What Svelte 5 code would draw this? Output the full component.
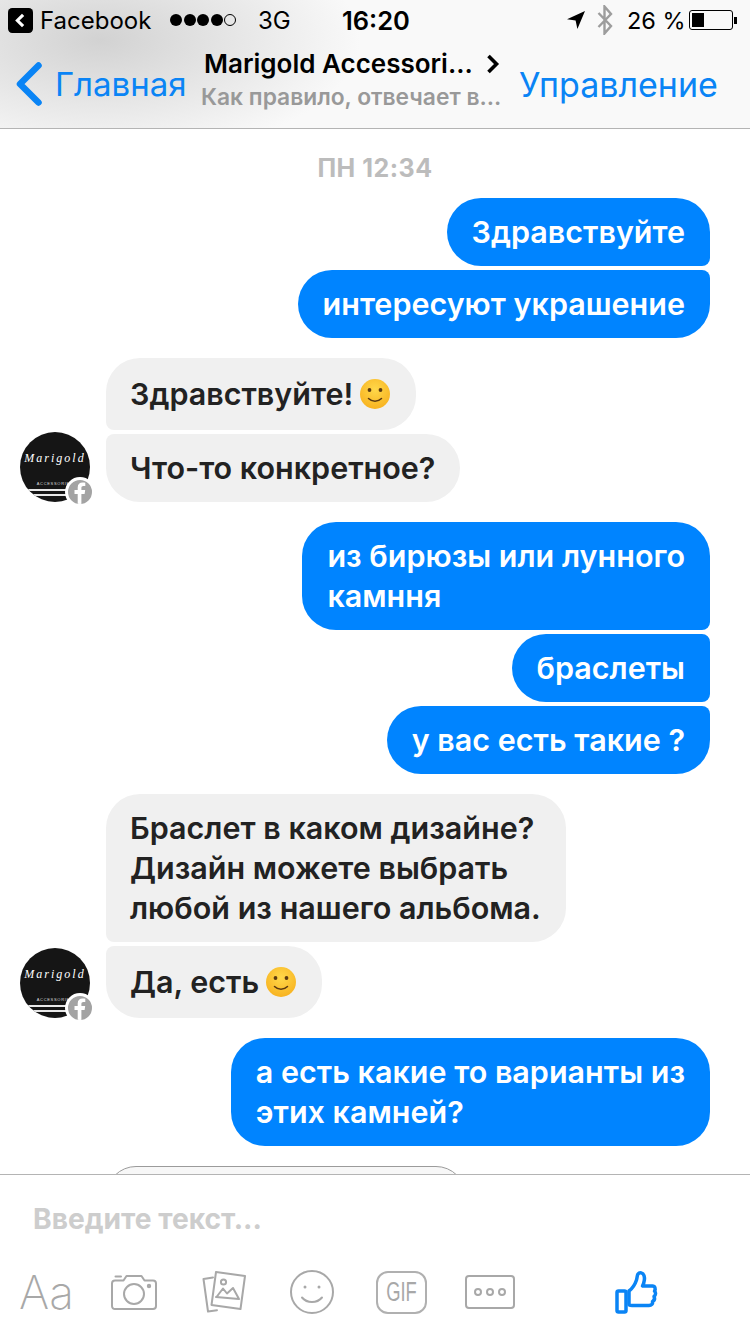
<script>
	// conversation, top to bottom
	const groups = [
		{ side: 'me', items: [{ lines: ['Здравствуйте'] }, { lines: ['интересуют украшение'] }] },
		{ side: 'them', items: [{ lines: ['Здравствуйте!'], smile: true }, { lines: ['Что-то конкретное?'] }] },
		{
			side: 'me',
			items: [
				{ lines: ['из бирюзы или лунного', 'камння'] },
				{ lines: ['браслеты'] },
				{ lines: ['у вас есть такие ?'] }
			]
		},
		{
			side: 'them',
			items: [
				{ lines: ['Браслет в каком дизайне?', 'Дизайн можете выбрать', 'любой из нашего альбома.'] },
				{ lines: ['Да, есть'], smile: true }
			]
		},
		{ side: 'me', items: [{ lines: ['а есть какие то варианты из', 'этих камней?'] }] }
	];
</script>

{#snippet smiley()}
	<svg class="smiley" viewBox="0 0 32 32" aria-hidden="true">
		<defs>
			<radialGradient id="sm" cx="50%" cy="35%" r="70%">
				<stop offset="0%" stop-color="#ffd84a" />
				<stop offset="100%" stop-color="#f7b01e" />
			</radialGradient>
		</defs>
		<circle cx="16" cy="16" r="15" fill="url(#sm)" />
		<circle cx="10.5" cy="12" r="1.9" fill="#5c3a10" />
		<circle cx="21.5" cy="12" r="1.9" fill="#5c3a10" />
		<path d="M9.5 20.5c3.5 3.6 9.5 3.6 13 0" fill="none" stroke="#5c3a10" stroke-width="1.5" stroke-linecap="round" />
	</svg>
{/snippet}

{#snippet avatar()}
	<div class="avatar">
		<div class="disc">
			<span class="brand">Marigold</span>
			<span class="brand-sub">ACCESSORIES</span>
			<span class="stripe"></span>
			<span class="stripe"></span>
		</div>
		<span class="fb-badge">
			<svg viewBox="0 0 24 24" aria-hidden="true">
				<path d="M13.4 24V14h3.2l.6-3.9h-3.8V8c0-1.2.5-2 2.1-2h1.8V2.700c-.8-.1-1.700-.2-2.700-.2-3 0-4.900 1.800-4.900 5v2.600H6.500V14h3.200v10z" fill="#fff" />
			</svg>
		</span>
	</div>
{/snippet}

<div class="screen">
	<header class="top">
		<div class="status">
			<span class="back-app">
				<svg viewBox="0 0 24 24" aria-hidden="true">
					<rect width="24" height="24" rx="4" fill="#000" />
					<path d="M14.500 6.500 9 12l5.500 5.500" fill="none" stroke="#fff" stroke-width="3" />
				</svg>
			</span>
			<span class="st-app">Facebook</span>
			<span class="signal">
				<i></i><i></i><i></i><i></i><i class="off"></i>
			</span>
			<span class="st-net">3G</span>
			<span class="st-time">16:20</span>
			<svg class="st-loc" viewBox="0 0 18 18" aria-hidden="true">
				<path d="M18 0 0 8.200l8.600 1.200L10.400 18z" fill="#000" />
			</svg>
			<svg class="st-bt" viewBox="0 0 16 30" aria-hidden="true">
				<path d="M1.500 8 14 21l-6.500 7.500V1.500L14 9 1.500 22" fill="none" stroke="#9d9d9d" stroke-width="2.400" />
			</svg>
			<span class="st-batt">26 %</span>
			<span class="battery"><span class="level"></span></span>
			<span class="nub"></span>
		</div>
		<nav class="nav">
			<div class="nav-back">
				<svg viewBox="0 0 27 44" aria-hidden="true">
					<path d="M23.500 3.500 5 22l18.500 18.500" fill="none" stroke="#0a84f5" stroke-width="6.500" stroke-linecap="round" stroke-linejoin="round" />
				</svg>
				<span>Главная</span>
			</div>
			<div class="nav-title">
				<div class="title-row">
					<span>Marigold Accessori...</span>
					<svg viewBox="0 0 14 20" aria-hidden="true">
						<path d="M2.500 2 10.500 10 2.500 18" fill="none" stroke="#000" stroke-width="3.600" />
					</svg>
				</div>
				<div class="subtitle">Как правило, отвечает в...</div>
			</div>
			<div class="nav-action">Управление</div>
		</nav>
	</header>

	<main class="thread">
		<div class="day">ПН 12:34</div>
		{#each groups as g}
			<section class="group {g.side}">
				{#if g.side === 'them'}
					{@render avatar()}
				{/if}
				<div class="stack">
					{#each g.items as m, i}
						<div class="bubble" class:first={i === 0} class:last={i === g.items.length - 1} class:tall={m.smile}>
							{#if m.smile}
								<span>{m.lines[0]}</span>
								{@render smiley()}
							{:else}
								{#each m.lines as line, n}
									{#if n > 0}<br />{/if}{line}
								{/each}
							{/if}
						</div>
					{/each}
				</div>
			</section>
		{/each}
		<div class="attachment"></div>
	</main>

	<footer class="composer">
		<div class="placeholder">Введите текст...</div>
		<div class="tools">
			<span class="aa">Aa</span>
			<svg class="cam" viewBox="0 0 46 36" aria-hidden="true">
				<path d="M1 9.500C1 7.500 2.500 6.500 4 6.500h8.500L15.500 2h15l3 4.500H42c1.800 0 3 1.200 3 3V32c0 1.800-1.200 3-3 3H4c-1.800 0-3-1.200-3-3z" />
				<circle cx="23" cy="20" r="10" />
				<path d="M4.500 2.500H10" />
				<circle cx="38" cy="12" r="1.200" fill="#a8a8a8" />
			</svg>
			<svg class="gal" viewBox="0 0 44 42" aria-hidden="true">
				<path d="M11 6.500 1.500 8 6 40.500l9-1.300" />
				<path d="M14 1 43 5 38.500 38 9.500 34z" />
				<circle cx="21.500" cy="11" r="2.600" />
				<path d="M14.500 26 21 17.500l4 5 6-5.500 6 11-23-2z" />
			</svg>
			<svg class="face" viewBox="0 0 44 44" aria-hidden="true">
				<circle cx="22" cy="22" r="21" />
				<circle cx="15" cy="17" r="1.500" fill="#a8a8a8" stroke="none" />
				<circle cx="29" cy="17" r="1.500" fill="#a8a8a8" stroke="none" />
				<path d="M12 27.500c5 6 15 6 20 0" />
			</svg>
			<span class="gif"><span>GIF</span></span>
			<svg class="more" viewBox="0 0 50 34" aria-hidden="true">
				<rect x="1" y="1" width="48" height="32" rx="3" />
				<circle cx="13" cy="17" r="3" />
				<circle cx="25" cy="17" r="3" />
				<circle cx="37" cy="17" r="3" />
			</svg>
			<svg class="thumb" viewBox="0 0 43 44" aria-hidden="true">
				<rect x="2" y="21" width="9" height="21" rx="1.500" />
				<path d="M14 21c4-3 6-6.500 7.500-11 .8-2.500.5-4.500 1.500-6 1.500-2 5-1.500 6 1.500 1 3-.3 8-1.500 10.500h10c2.500 0 3.500 3 2 5 1.500 1.500 1.500 4-.5 5.500 1 2 .3 4-1.500 5 .5 2.500-1 4-3.500 4H17c-1.300 0-3-.5-3-1.500z" />
			</svg>
		</div>
	</footer>
</div>

<style>
	:global(body) {
		background: #fff;
	}

	.screen {
		width: 750px;
		height: 1334px;
		display: flex;
		flex-direction: column;
		overflow: hidden;
		font-family: Inter, 'Liberation Sans', sans-serif;
		background: #fff;
	}

	/* ── Header ── */

	.top {
		box-sizing: border-box;
		height: 129px;
		flex-shrink: 0;
		border-bottom: 1px solid #b4b4b4;
		background:
			radial-gradient(ellipse 260px 120px at 100px 40px, #d2d2d2 0%, rgba(210, 210, 210, 0) 100%),
			#f9f9f9;
	}

	.status {
		height: 40px;
		display: flex;
		align-items: center;
		padding-left: 8px;
		color: #000;
		font-size: 24px;
	}

	.back-app svg {
		display: block;
		width: 25px;
		height: 25px;
	}

	.st-app {
		margin-left: 7px;
		width: 130px;
	}

	.signal {
		display: flex;
		gap: 1.500px;
		width: 88px;
	}

	.signal i {
		width: 12px;
		height: 12px;
		border-radius: 50%;
		background: #000;
	}

	.signal i.off {
		background: none;
		border: 1px solid #000;
		box-sizing: border-box;
	}

	.st-net {
		width: 84px;
	}

	.st-time {
		width: 225px;
		font-size: 25.500px;
		font-weight: 600;
	}

	.st-loc {
		width: 18px;
		height: 18px;
		margin-right: 12px;
	}

	.st-bt {
		width: 16px;
		height: 30px;
		margin-right: 14px;
	}

	.st-batt {
		width: 62px;
		font-size: 23.500px;
	}

	.battery {
		box-sizing: border-box;
		width: 44px;
		height: 20px;
		border: 1px solid #000;
		border-radius: 3px;
		padding: 2px;
	}

	.level {
		display: block;
		width: 12px;
		height: 100%;
		background: #000;
	}

	.nub {
		width: 3px;
		height: 7px;
		margin-left: 1px;
		background: #000;
	}

	.nav {
		height: 88px;
		display: flex;
		align-items: flex-start;
		color: #0a84f5;
	}

	.nav-back {
		width: 201px;
		display: flex;
		align-items: center;
		gap: 13px;
		padding: 22px 0 0 15px;
		box-sizing: border-box;
		font-size: 33px;
		flex-shrink: 0;
	}

	.nav-back svg {
		width: 27px;
		height: 44px;
		flex-shrink: 0;
	}

	.nav-title {
		width: 318px;
		flex-shrink: 0;
		padding-top: 7px;
	}

	.title-row {
		display: flex;
		align-items: center;
		gap: 13px;
		padding-left: 3px;
		color: #000;
		font-size: 26px;
		font-weight: 600;
		line-height: 34px;
	}

	.title-row svg {
		width: 14px;
		height: 20px;
	}

	.subtitle {
		color: #999;
		font-size: 22.800px;
		font-weight: 600;
		line-height: 32px;
		white-space: nowrap;
	}

	.nav-action {
		font-size: 34px;
		padding-top: 24px;
	}

	/* ── Thread ── */

	.thread {
		flex: 1;
		min-height: 0;
		overflow: hidden;
		font-size: 30.500px;
		font-weight: 580;
		line-height: 40px;
	}

	.day {
		margin: 24px 0 15px;
		text-align: center;
		color: #bcbcbc;
		font-size: 25px;
		font-weight: 700;
		line-height: 30px;
		letter-spacing: 0.500px;
	}

	.group {
		display: flex;
		align-items: flex-end;
		gap: 16px;
		margin-bottom: 20px;
	}

	.group.me {
		justify-content: flex-end;
		padding-right: 40px;
	}

	.group.them {
		padding-left: 20px;
	}

	.stack {
		display: flex;
		flex-direction: column;
		gap: 4px;
	}

	.me .stack {
		align-items: flex-end;
	}

	.them .stack {
		align-items: flex-start;
	}

	.bubble {
		padding: 14px 25px;
		border-radius: 34px;
		white-space: nowrap;
	}

	.me .bubble {
		background: #0084ff;
		color: #fff;
	}

	.them .bubble {
		background: #f0f0f0;
		color: #222;
		padding-left: 24px;
	}

	.me .bubble:not(.last) {
		border-bottom-right-radius: 8px;
	}

	.me .bubble:not(.first) {
		border-top-right-radius: 8px;
	}

	.them .bubble:not(.last) {
		border-bottom-left-radius: 8px;
	}

	.them .bubble:not(.first) {
		border-top-left-radius: 8px;
	}

	.bubble.tall {
		display: flex;
		align-items: center;
		gap: 6px;
		padding-top: 16px;
		padding-bottom: 16px;
	}

	.smiley {
		width: 32px;
		height: 32px;
		flex-shrink: 0;
	}

	.avatar {
		position: relative;
		width: 70px;
		height: 70px;
		flex-shrink: 0;
	}

	.disc {
		width: 70px;
		height: 70px;
		border-radius: 50%;
		overflow: hidden;
		background: #151515;
		color: #fff;
		display: flex;
		flex-direction: column;
		align-items: center;
	}

	.brand {
		margin-top: 18px;
		font-family: 'Liberation Serif', serif;
		font-style: italic;
		font-size: 12px;
		line-height: 16px;
		font-weight: 400;
		letter-spacing: 2px;
		white-space: nowrap;
	}

	.brand-sub {
		margin-top: 15px;
		font-family: 'Liberation Sans', sans-serif;
		font-size: 4px;
		line-height: 5px;
		font-weight: 400;
		letter-spacing: 0.700px;
		color: #ddd;
		white-space: nowrap;
	}

	.stripe {
		flex-shrink: 0;
		width: 100%;
		height: 2px;
		margin-top: 3px;
		background: #e8e8e8;
	}

	.fb-badge {
		position: absolute;
		right: -5px;
		bottom: -5px;
		box-sizing: border-box;
		width: 30px;
		height: 30px;
		border-radius: 50%;
		border: 3px solid #fff;
		background: #a3a3a3;
		overflow: hidden;
	}

	.fb-badge svg {
		display: block;
		width: 24px;
		height: 24px;
	}

	.attachment {
		box-sizing: border-box;
		width: 360px;
		height: 60px;
		margin-left: 106px;
		border: 1px solid #9b9b9b;
		border-radius: 30px;
		background: #f7f7f7;
	}

	/* ── Composer ── */

	.composer {
		height: 160px;
		flex-shrink: 0;
		box-sizing: border-box;
		border-top: 1px solid #b4b4b4;
		background: #fff;
	}

	.placeholder {
		padding: 26px 0 0 33px;
		color: #cdcdcd;
		font-size: 28.200px;
		font-weight: 700;
		line-height: 36px;
	}

	.tools {
		display: flex;
		align-items: center;
		height: 56px;
		margin-top: 27px;
		padding-left: 20px;
	}

	.tools svg {
		flex-shrink: 0;
		fill: none;
		stroke: #a8a8a8;
		stroke-width: 2;
		stroke-linejoin: round;
		stroke-linecap: round;
	}

	.aa {
		width: 91px;
		margin-left: -1px;
		margin-right: 1px;
		color: #a8a8a8;
		font-size: 46px;
		font-weight: 200;
	}

	.cam {
		width: 46px;
		height: 36px;
		margin-right: 45px;
	}

	.gal {
		width: 44px;
		height: 42px;
		margin-right: 44px;
	}

	.face {
		width: 44px;
		height: 44px;
		margin-right: 42px;
	}

	.gif {
		box-sizing: border-box;
		width: 51px;
		height: 43px;
		margin-right: 38px;
		border: 2px solid #b0b0b0;
		border-radius: 12px;
		color: #a8a8a8;
		font-family: 'Liberation Sans', sans-serif;
		font-size: 27px;
		font-weight: 400;
		line-height: 39px;
		text-align: center;
	}

	.gif span {
		display: block;
		transform: scaleX(0.68);
		white-space: nowrap;
	}

	.more {
		width: 50px;
		height: 34px;
		margin-right: 100px;
	}

	.tools .thumb {
		width: 43px;
		height: 44px;
		stroke: #0a84f5;
		stroke-width: 3.500;
	}
</style>
